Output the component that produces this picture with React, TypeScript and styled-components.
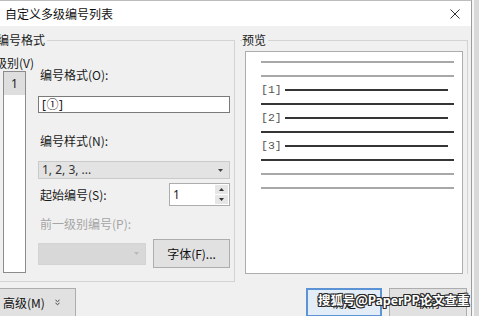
import React from 'react';
import styled, { createGlobalStyle } from 'styled-components';

const GlobalStyle = createGlobalStyle`
  html, body { margin: 0; padding: 0; }
  body {
    background: #dcdcdc;
    font-family: "Noto Sans CJK SC", "Noto Sans", sans-serif;
    font-size: 12px;
    color: #1a1a1a;
  }
`;

const Screen = styled.div`
  width: 479px;
  height: 316px;
  display: flex;
  overflow: hidden;
`;

const Dialog = styled.div`
  position: relative;
  width: 472px;
  height: 316px;
  flex-shrink: 0;
  box-sizing: border-box;
  background: #f0f0f0;
  border-top: 1px solid #bdbdbd;
  border-right: 1px solid #9c9c9c;
  display: flex;
  flex-direction: column;
  overflow: hidden;
`;

const Edge = styled.div`
  flex: 1;
  background: #d9d9d9;
  border-left: 2px solid #f6f6f6;
`;

const TitleBar = styled.div`
  height: 25px;
  flex-shrink: 0;
  background: #fff;
  display: flex;
  align-items: center;
  justify-content: space-between;
  padding: 0 11px 0 5px;
`;

const Title = styled.span`
  font-size: 12px;
  line-height: 14px;
  color: #111;
`;

const GroupsRow = styled.div`
  display: flex;
  align-items: flex-start;
  margin-top: 7px;
`;

const GroupBox = styled.fieldset`
  margin: 0;
  padding: 0;
  min-width: 0;
  box-sizing: border-box;
  border: 1px solid #d3d3d3;
`;

const FormatGroup = styled(GroupBox)`
  margin-left: -8px;
  width: 243px;
  padding-bottom: 8px;
`;

const PreviewGroup = styled(GroupBox)`
  margin-left: 5px;
  width: 228px;
  border-left: none;
  border-bottom: none;
`;

const Legend = styled.legend<{ $offset: number }>`
  margin-left: ${p => p.$offset}px;
  padding: 0 2px 0 0;
  font-size: 12px;
  line-height: 14px;
  color: #1a1a1a;
`;

const FormatInner = styled.div`
  display: flex;
`;

const LevelColumn = styled.div`
  width: 45px;
  flex-shrink: 0;
  display: flex;
  flex-direction: column;
`;

const LevelLabel = styled.div`
  margin: 9px 0 0 2px;
  line-height: 14px;
  white-space: nowrap;
`;

const LevelList = styled.div`
  margin: 1px 0 0 10px;
  width: 23px;
  height: 202px;
  box-sizing: border-box;
  background: #fff;
  border: 1px solid #8c8c8c;
`;

const LevelItem = styled.div<{ $selected?: boolean }>`
  height: 23px;
  display: flex;
  align-items: center;
  justify-content: center;
  font-family: "Noto Sans", sans-serif;
  font-size: 12px;
  color: #222;
  background: ${p => (p.$selected ? '#dedede' : 'transparent')};
`;

const FormColumn = styled.div`
  width: 192px;
  display: flex;
  flex-direction: column;
`;

const FieldLabel = styled.div<{ $gap: number; $disabled?: boolean }>`
  margin-top: ${p => p.$gap}px;
  padding-left: 2px;
  line-height: 14px;
  white-space: nowrap;
  color: ${p => (p.$disabled ? '#a5a5a5' : '#1a1a1a')};
`;

const TextBox = styled.div`
  margin-top: 14px;
  height: 17px;
  box-sizing: border-box;
  border: 1px solid #7a7a7a;
  background: #fff;
  padding-left: 3px;
  display: flex;
  align-items: center;
  font-family: "Noto Sans", "Noto Sans CJK SC", sans-serif;
  font-size: 12px;
  line-height: 14px;
  letter-spacing: 0.5px;
  color: #222;
`;

const Select = styled.div<{ $width: number; $height: number; $disabled?: boolean; $gap?: number }>`
  margin-top: ${p => p.$gap ?? 0}px;
  width: ${p => p.$width}px;
  height: ${p => p.$height}px;
  box-sizing: border-box;
  border: 1px solid ${p => (p.$disabled ? '#d3d3d3' : '#cacaca')};
  background: ${p => (p.$disabled ? '#d8d8d8' : '#e3e3e3')};
  display: flex;
  align-items: center;
  padding: 0 6px 0 3px;
  color: #333;
  font-family: "Noto Sans", "Noto Sans CJK SC", sans-serif;
  font-size: 12px;
`;

const SelectText = styled.span`
  flex: 1;
  line-height: 14px;
`;

const Caret = styled.svg<{ $disabled?: boolean }>`
  width: 5px;
  height: 3px;
  fill: ${p => (p.$disabled ? '#b9b9b9' : '#444')};
`;

const FieldRow = styled.div<{ $gap: number }>`
  margin-top: ${p => p.$gap}px;
  display: flex;
  align-items: center;
  justify-content: space-between;
`;

const Spinner = styled.div`
  width: 61px;
  height: 23px;
  box-sizing: border-box;
  border: 1px solid #adadad;
  background: #fff;
  display: flex;
`;

const SpinValue = styled.span`
  flex: 1;
  padding-left: 3px;
  display: flex;
  align-items: center;
  font-family: "Noto Sans", sans-serif;
  font-size: 12px;
  color: #222;
`;

const SpinButtons = styled.div`
  width: 13px;
  display: flex;
  flex-direction: column;
  gap: 1px;
  padding: 1px 1px 1px 0;
`;

const SpinButton = styled.div`
  flex: 1;
  background: #e6e6e6;
  display: flex;
  align-items: center;
  justify-content: center;
`;

const SpinArrow = styled.svg`
  width: 5px;
  height: 3px;
  fill: #333;
`;

const PushButton = styled.button<{ $width: number; $primary?: boolean }>`
  width: ${p => p.$width}px;
  height: 29px;
  box-sizing: border-box;
  margin: 0;
  padding: 0;
  border: ${p => (p.$primary ? '2px solid #5b93d4' : '1px solid #adadad')};
  background: ${p => (p.$primary ? '#e3edf8' : '#e1e1e1')};
  font-family: "Noto Sans CJK SC", "Noto Sans", sans-serif;
  font-size: 12px;
  line-height: 14px;
  color: #111;
  display: flex;
  align-items: center;
  justify-content: center;
  gap: 10px;
`;

const PreviewBox = styled.div`
  margin: 4px 0 0 5px;
  width: 218px;
  height: 223px;
  box-sizing: border-box;
  background: #fff;
  border: 1px solid #adadad;
  padding: 3px 0 0 15px;
`;

const PreviewRow = styled.div`
  height: 14px;
  display: flex;
  align-items: center;
`;

const Rule = styled.div<{ $dark?: boolean; $width: number }>`
  width: ${p => p.$width}px;
  height: 2px;
  background: ${p => (p.$dark ? '#353535' : '#a8a8a8')};
`;

const RowLabel = styled.span`
  width: 24px;
  font-family: "Liberation Mono", monospace;
  font-size: 11.5px;
  line-height: 14px;
  color: #555;
`;

const ButtonBar = styled.div`
  display: flex;
  align-items: center;
  margin-top: 6px;
  padding-right: 4px;
`;

const MoreButton = styled(PushButton)`
  margin-left: -1px;
  justify-content: flex-start;
  padding-left: 3px;
`;

const Spacer = styled.div`
  flex: 1;
`;

const ButtonGap = styled.div`
  width: 7px;
`;

const Watermark = styled.div`
  position: absolute;
  left: 318px;
  top: 291px;
  font-family: "Noto Sans CJK SC", sans-serif;
  font-weight: 700;
  font-size: 12.4px;
  line-height: 16px;
  color: #fff;
  white-space: nowrap;
  text-shadow: -1px -1px 0 #2a2a2a, 1px -1px 0 #2a2a2a, -1px 1px 0 #2a2a2a, 1px 1px 0 #2a2a2a,
    0 1px 0 #2a2a2a, 0 -1px 0 #2a2a2a, 1px 0 0 #2a2a2a, -1px 0 0 #2a2a2a;
`;

const CaretIcon = ({ disabled }: { disabled?: boolean }) => (
  <Caret $disabled={disabled} viewBox="0 0 5 3">
    <path d="M0 0 H5 L2.5 3 Z" />
  </Caret>
);

const previewRows: Array<{ label?: string; dark?: boolean }> = [
  {},
  {},
  { label: '[1]', dark: true },
  { dark: true },
  { label: '[2]', dark: true },
  { dark: true },
  { label: '[3]', dark: true },
  { dark: true },
  {},
  {},
];

export default function App() {
  return (
    <>
      <GlobalStyle />
      <Screen>
        <Dialog>
          <TitleBar>
            <Title>自定义多级编号列表</Title>
            <svg width="10" height="10" viewBox="0 0 10 10">
              <path d="M0.5 0.5 L9.5 9.5 M9.5 0.5 L0.5 9.5" stroke="#333" strokeWidth="1" />
            </svg>
          </TitleBar>

          <GroupsRow>
            <FormatGroup>
              <Legend $offset={4}>编号格式</Legend>
              <FormatInner>
                <LevelColumn>
                  <LevelLabel>级别(V)</LevelLabel>
                  <LevelList>
                    <LevelItem $selected>1</LevelItem>
                  </LevelList>
                </LevelColumn>
                <FormColumn>
                  <FieldLabel $gap={21}>编号格式(O):</FieldLabel>
                  <TextBox>[①]</TextBox>
                  <FieldLabel $gap={21}>编号样式(N):</FieldLabel>
                  <Select $gap={13} $width={192} $height={18}>
                    <SelectText>1, 2, 3, ...</SelectText>
                    <CaretIcon />
                  </Select>
                  <FieldRow $gap={4}>
                    <FieldLabel $gap={0}>起始编号(S):</FieldLabel>
                    <Spinner>
                      <SpinValue>1</SpinValue>
                      <SpinButtons>
                        <SpinButton>
                          <SpinArrow viewBox="0 0 5 3">
                            <path d="M0 3 H5 L2.5 0 Z" />
                          </SpinArrow>
                        </SpinButton>
                        <SpinButton>
                          <SpinArrow viewBox="0 0 5 3">
                            <path d="M0 0 H5 L2.5 3 Z" />
                          </SpinArrow>
                        </SpinButton>
                      </SpinButtons>
                    </Spinner>
                  </FieldRow>
                  <FieldLabel $gap={11} $disabled>前一级别编号(P):</FieldLabel>
                  <FieldRow $gap={8}>
                    <Select $width={108} $height={22} $disabled>
                      <SelectText />
                      <CaretIcon disabled />
                    </Select>
                    <PushButton $width={77}>字体(F)...</PushButton>
                  </FieldRow>
                </FormColumn>
              </FormatInner>
            </FormatGroup>

            <PreviewGroup>
              <Legend $offset={2}>预览</Legend>
              <PreviewBox>
                {previewRows.map((row, i) => (
                  <PreviewRow key={i}>
                    {row.label ? (
                      <>
                        <RowLabel>{row.label}</RowLabel>
                        <Rule $dark $width={163} />
                      </>
                    ) : (
                      <Rule $dark={row.dark} $width={193} />
                    )}
                  </PreviewRow>
                ))}
              </PreviewBox>
            </PreviewGroup>
          </GroupsRow>

          <ButtonBar>
            <MoreButton $width={77}>
              高级(M)
              <svg width="5" height="7" viewBox="0 0 5 7">
                <path d="M0.5 1 L2.5 2.6 L4.5 1 M0.5 4 L2.5 5.6 L4.5 4" stroke="#444" strokeWidth="1" fill="none" />
              </svg>
            </MoreButton>
            <Spacer />
            <PushButton $width={76} $primary>确定</PushButton>
            <ButtonGap />
            <PushButton $width={78}>取消</PushButton>
          </ButtonBar>

          <Watermark>搜狐号@PaperPP论文查重</Watermark>
        </Dialog>
        <Edge />
      </Screen>
    </>
  );
}
